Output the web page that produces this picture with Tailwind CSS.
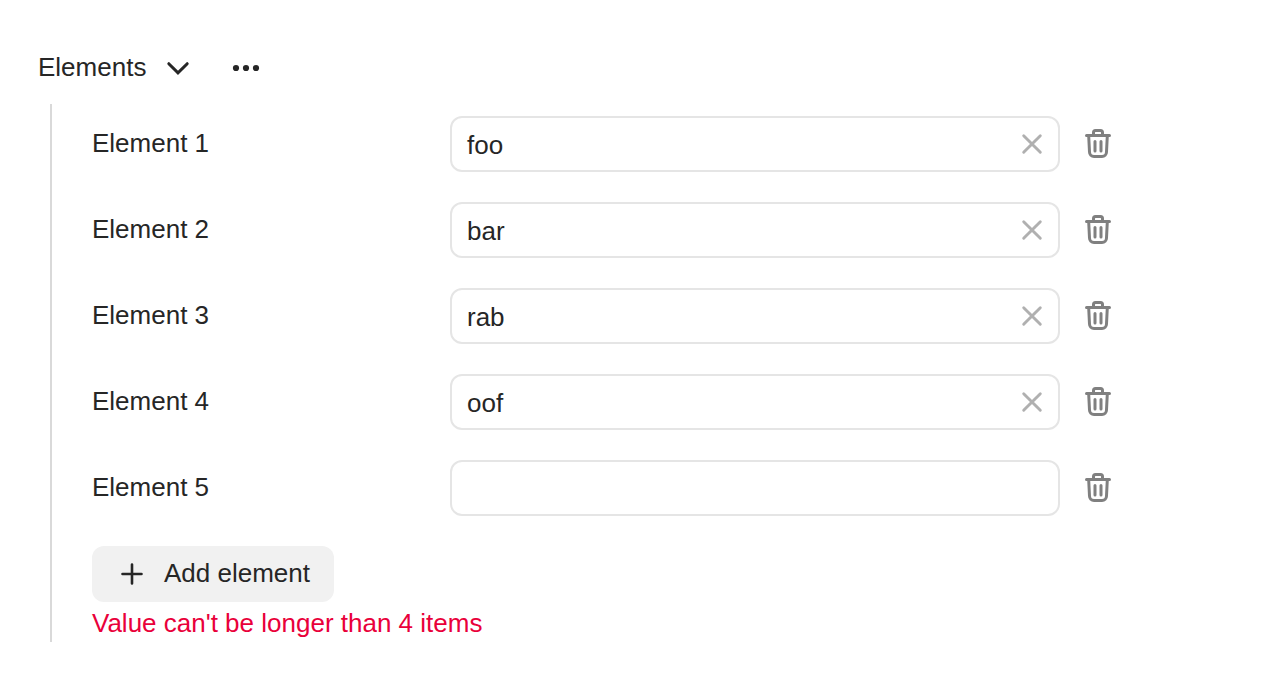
<!DOCTYPE html>
<html lang="en">
<head>
<meta charset="utf-8">
<title>Elements</title>
<script src="https://cdn.jsdelivr.net/npm/@tailwindcss/browser@4"></script>
</head>
<body class="bg-white font-['Liberation_Sans',Arial,sans-serif] text-[26px] leading-9 text-[#262626]">
<svg class="hidden">
  <symbol id="clear" viewBox="0 0 32 32"><path d="M7.700 7.700 24.300 24.300M24.300 7.700 7.700 24.300" fill="none" stroke="#b0b0b0" stroke-width="2.900" stroke-linecap="round"/></symbol>
  <symbol id="trash" viewBox="0 0 32 32"><g fill="none" stroke="#808080" stroke-width="3" stroke-linecap="round" stroke-linejoin="round"><path d="M4.500 7.500H27.500M11.500 7V4.500a2 2 0 0 1 2-2h5a2 2 0 0 1 2 2V7M6.700 8 7.500 24a4.500 4.500 0 0 0 4.500 4.500H20a4.500 4.500 0 0 0 4.500-4.500L25.300 8M13 13.500V23M19 13.500V23"/></g></symbol>
</svg>
<main class="pt-[49px] pl-[38px]">
  <header class="flex h-[55px] items-start">
    <h1>Elements</h1>
    <svg class="ml-4 mt-[3px] size-8" viewBox="0 0 32 32" fill="none" stroke="#262626" stroke-width="3" stroke-linecap="round" stroke-linejoin="miter"><path d="M6.800 11.700 16 20.900 25.200 11.700"/></svg>
    <svg class="ml-9 mt-[3px] size-8" viewBox="0 0 32 32" fill="#262626"><circle cx="6" cy="16" r="3.100"/><circle cx="16" cy="16" r="3.100"/><circle cx="26" cy="16" r="3.100"/></svg>
  </header>
  <section class="ml-3 flex h-[538px] flex-col items-start border-l-2 border-[#d9d9d9] pl-10 pt-3">
    <div class="flex flex-col gap-[30px]">
      <div class="flex h-14"><label class="w-[358px] pt-[9px]">Element 1</label><div class="flex h-14 w-[610px] items-center justify-between rounded-[12px] border-2 border-[#e5e5e5] pr-[10px] pl-[15px]"><span class="pt-[2px]">foo</span><svg class="size-8"><use href="#clear"/></svg></div><svg class="ml-[22px] mt-3 size-8"><use href="#trash"/></svg></div>
      <div class="flex h-14"><label class="w-[358px] pt-[9px]">Element 2</label><div class="flex h-14 w-[610px] items-center justify-between rounded-[12px] border-2 border-[#e5e5e5] pr-[10px] pl-[15px]"><span class="pt-[2px]">bar</span><svg class="size-8"><use href="#clear"/></svg></div><svg class="ml-[22px] mt-3 size-8"><use href="#trash"/></svg></div>
      <div class="flex h-14"><label class="w-[358px] pt-[9px]">Element 3</label><div class="flex h-14 w-[610px] items-center justify-between rounded-[12px] border-2 border-[#e5e5e5] pr-[10px] pl-[15px]"><span class="pt-[2px]">rab</span><svg class="size-8"><use href="#clear"/></svg></div><svg class="ml-[22px] mt-3 size-8"><use href="#trash"/></svg></div>
      <div class="flex h-14"><label class="w-[358px] pt-[9px]">Element 4</label><div class="flex h-14 w-[610px] items-center justify-between rounded-[12px] border-2 border-[#e5e5e5] pr-[10px] pl-[15px]"><span class="pt-[2px]">oof</span><svg class="size-8"><use href="#clear"/></svg></div><svg class="ml-[22px] mt-3 size-8"><use href="#trash"/></svg></div>
      <div class="flex h-14"><label class="w-[358px] pt-[9px]">Element 5</label><div class="h-14 w-[610px] rounded-[12px] border-2 border-[#e5e5e5]"></div><svg class="ml-[22px] mt-3 size-8"><use href="#trash"/></svg></div>
    </div>
    <button class="mt-[30px] flex h-14 w-[242px] items-start rounded-[12px] bg-[#f1f1f1] pl-6">
      <svg class="mt-3 size-8" viewBox="0 0 32 32" fill="none" stroke="#262626" stroke-width="2.600" stroke-linecap="round"><path d="M16 6.500V25.500M6.500 16H25.500"/></svg>
      <span class="ml-4 pt-[9px]">Add element</span>
    </button>
    <p class="mt-[3px] text-[#e9003a]">Value can't be longer than 4 items</p>
  </section>
</main>
</body>
</html>
